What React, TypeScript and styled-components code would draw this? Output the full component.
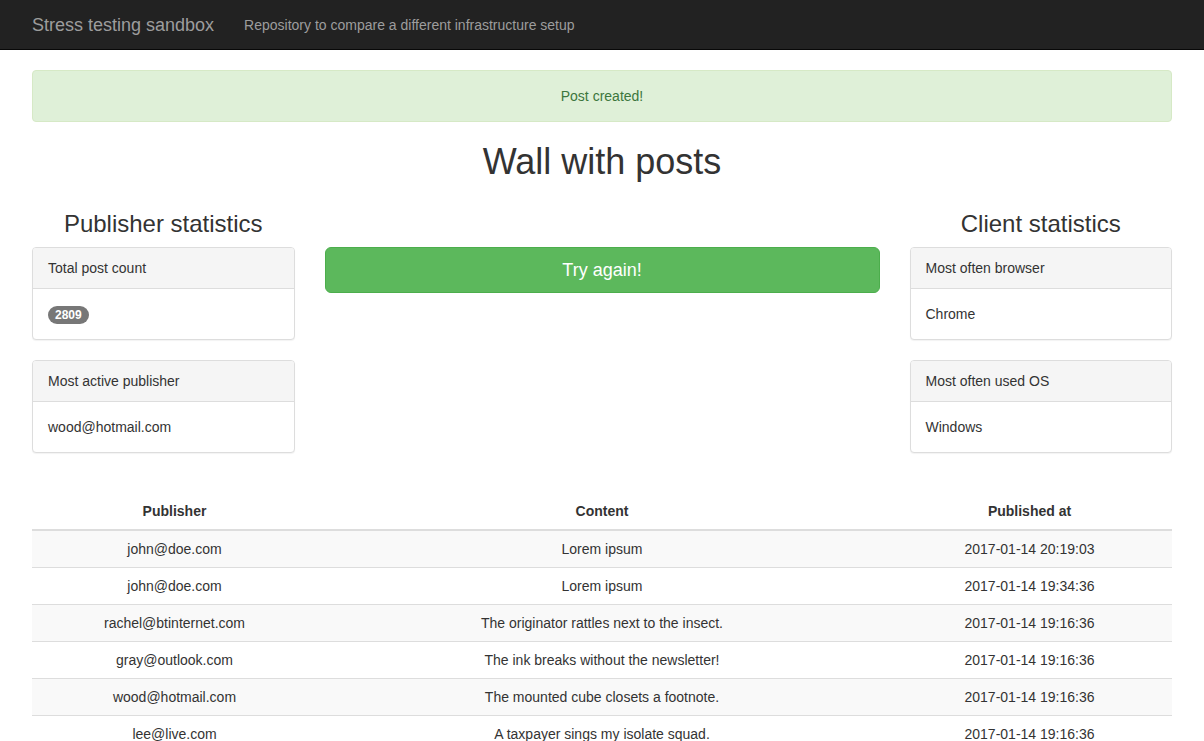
import React from "react";
import styled, { createGlobalStyle } from "styled-components";

const GlobalStyle = createGlobalStyle`
  * { box-sizing: border-box; }
  html, body { margin: 0; padding: 0; }
  body {
    font-family: "Liberation Sans", Arial, sans-serif;
    font-size: 14px;
    line-height: 1.42857143;
    color: #333;
    background: #fff;
  }
`;

const Navbar = styled.nav`
  height: 50px;
  background: #222;
  border-bottom: 1px solid #080808;
  margin-bottom: 20px;
`;

const Container = styled.div`
  width: 1170px;
  margin: 0 auto;
  padding: 0 15px;
`;

const NavInner = styled(Container)`
  display: flex;
  align-items: center;
  height: 49px;
`;

const Brand = styled.a`
  font-size: 18px;
  line-height: 20px;
  color: #9d9d9d;
  text-decoration: none;
`;

const NavText = styled.p`
  margin: 0 0 0 30px;
  color: #9d9d9d;
  font-size: 14px;
  line-height: 20px;
`;

const Alert = styled.div`
  padding: 15px;
  margin-bottom: 20px;
  border: 1px solid #d6e9c6;
  border-radius: 4px;
  background: #dff0d8;
  color: #3c763d;
  text-align: center;
`;

const Title = styled.h1`
  font-size: 36px;
  font-weight: 500;
  line-height: 1.1;
  margin: 20px 0 10px;
  text-align: center;
`;

const Row = styled.div`
  display: grid;
  grid-template-columns: 262.5px 555px 262.5px;
  column-gap: 30px;
`;

const Column = styled.div`
  display: flex;
  flex-direction: column;
`;

const SectionTitle = styled.h3`
  font-size: 24px;
  font-weight: 500;
  line-height: 1.1;
  margin: 19px 0 10px;
  text-align: center;
`;

const Panel = styled.div`
  border: 1px solid #ddd;
  border-radius: 4px;
  margin-bottom: 20px;
  background: #fff;
  box-shadow: 0 1px 1px rgba(0, 0, 0, 0.05);
`;

const PanelHeading = styled.div`
  padding: 10px 15px;
  background: #f5f5f5;
  border-bottom: 1px solid #ddd;
  border-radius: 3px 3px 0 0;
`;

const PanelBody = styled.div`
  padding: 15px;
`;

const Badge = styled.span`
  display: inline-block;
  min-width: 10px;
  padding: 3px 7px;
  font-size: 12px;
  font-weight: bold;
  line-height: 1;
  color: #fff;
  text-align: center;
  vertical-align: middle;
  background: #777;
  border-radius: 10px;
`;

const ActionButton = styled.button`
  display: block;
  width: 100%;
  margin-top: 55.4px;
  padding: 10px 16px;
  font-family: inherit;
  font-size: 18px;
  line-height: 1.3333333;
  color: #fff;
  background: #5cb85c;
  border: 1px solid #4cae4c;
  border-radius: 6px;
  cursor: pointer;
`;

const Table = styled.table`
  width: 100%;
  margin-top: 20px;
  border-collapse: collapse;
  border-spacing: 0;
`;

const Th = styled.th`
  padding: 8px;
  line-height: 20px;
  text-align: center;
  font-weight: bold;
  border-bottom: 2px solid #ddd;
`;

const Tr = styled.tr<{ $striped: boolean }>`
  background: ${(p) => (p.$striped ? "#f9f9f9" : "transparent")};
`;

const Td = styled.td`
  padding: 8px;
  line-height: 20px;
  text-align: center;
  border-top: 1px solid #ddd;
`;

const posts = [
  ["john@doe.com", "Lorem ipsum", "2017-01-14 20:19:03"],
  ["john@doe.com", "Lorem ipsum", "2017-01-14 19:34:36"],
  ["rachel@btinternet.com", "The originator rattles next to the insect.", "2017-01-14 19:16:36"],
  ["gray@outlook.com", "The ink breaks without the newsletter!", "2017-01-14 19:16:36"],
  ["wood@hotmail.com", "The mounted cube closets a footnote.", "2017-01-14 19:16:36"],
  ["lee@live.com", "A taxpayer sings my isolate squad.", "2017-01-14 19:16:36"],
];

export default function App() {
  return (
    <>
      <GlobalStyle />
      <Navbar>
        <NavInner>
          <Brand href="#">Stress testing sandbox</Brand>
          <NavText>Repository to compare a different infrastructure setup</NavText>
        </NavInner>
      </Navbar>
      <Container>
        <Alert>Post created!</Alert>
        <Title>Wall with posts</Title>
        <Row>
          <Column>
            <SectionTitle>Publisher statistics</SectionTitle>
            <Panel>
              <PanelHeading>Total post count</PanelHeading>
              <PanelBody>
                <Badge>2809</Badge>
              </PanelBody>
            </Panel>
            <Panel>
              <PanelHeading>Most active publisher</PanelHeading>
              <PanelBody>wood@hotmail.com</PanelBody>
            </Panel>
          </Column>
          <Column>
            <ActionButton>Try again!</ActionButton>
          </Column>
          <Column>
            <SectionTitle>Client statistics</SectionTitle>
            <Panel>
              <PanelHeading>Most often browser</PanelHeading>
              <PanelBody>Chrome</PanelBody>
            </Panel>
            <Panel>
              <PanelHeading>Most often used OS</PanelHeading>
              <PanelBody>Windows</PanelBody>
            </Panel>
          </Column>
        </Row>
        <Table>
          <colgroup>
            <col style={{ width: "25%" }} />
            <col style={{ width: "50%" }} />
            <col style={{ width: "25%" }} />
          </colgroup>
          <thead>
            <tr>
              <Th>Publisher</Th>
              <Th>Content</Th>
              <Th>Published at</Th>
            </tr>
          </thead>
          <tbody>
            {posts.map((p, i) => (
              <Tr key={i} $striped={i % 2 === 0}>
                <Td>{p[0]}</Td>
                <Td>{p[1]}</Td>
                <Td>{p[2]}</Td>
              </Tr>
            ))}
          </tbody>
        </Table>
      </Container>
    </>
  );
}
